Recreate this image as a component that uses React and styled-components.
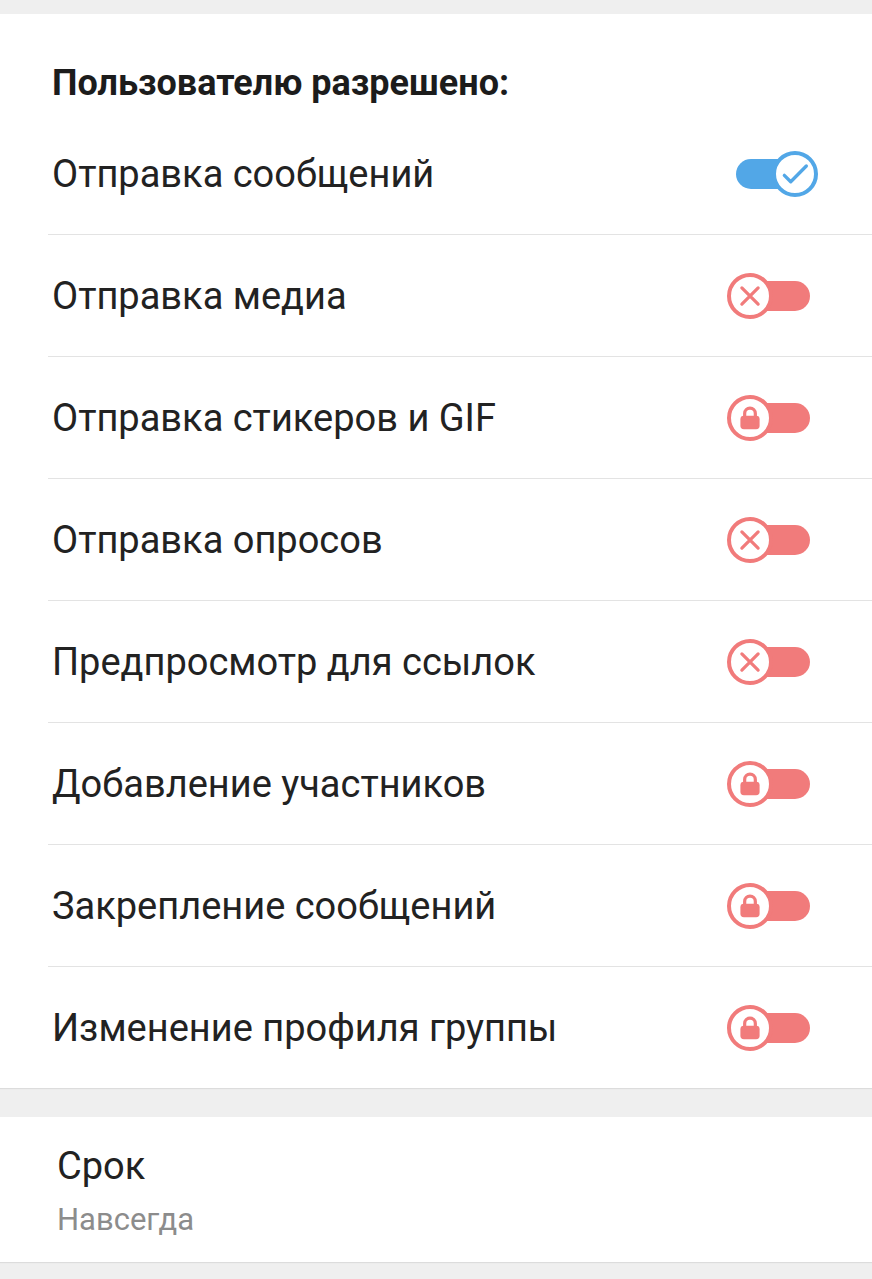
import React from "react";
import styled, { createGlobalStyle } from "styled-components";

const GlobalStyle = createGlobalStyle`
  html, body {
    margin: 0;
    padding: 0;
    background: #efefef;
    font-family: Roboto, "Noto Sans", "Liberation Sans", sans-serif;
  }
`;

const BLUE = "#52a7e7";
const RED = "#f17b7b";

const rows = [
  { label: "Отправка сообщений", state: "on" },
  { label: "Отправка медиа", state: "off" },
  { label: "Отправка стикеров и GIF", state: "locked" },
  { label: "Отправка опросов", state: "off" },
  { label: "Предпросмотр для ссылок", state: "off" },
  { label: "Добавление участников", state: "locked" },
  { label: "Закрепление сообщений", state: "locked" },
  { label: "Изменение профиля группы", state: "locked" },
];

const Page = styled.div`
  padding-top: 14px;
  min-height: 1279px;
  box-sizing: border-box;
`;

const Card = styled.div`
  background: #fff;
  box-shadow: 0 1px 1px rgba(0, 0, 0, 0.08);
`;

const SectionTitle = styled.div`
  padding: 48px 0 9px 52px;
  font-size: 36px;
  line-height: 42px;
  font-weight: 700;
  color: #1c1c1c;
`;

const Row = styled.div`
  display: flex;
  align-items: center;
  justify-content: space-between;
  height: 121px;
  margin-left: 48px;
  padding: 0 54px 0 4px;
  border-bottom: ${(p) => (p.$last ? "none" : "1px solid #e3e3e3")};
`;

const Label = styled.span`
  font-size: 38px;
  color: #222;
`;

const Toggle = styled.div`
  position: relative;
  width: 91px;
  height: 48px;
  display: flex;
  align-items: center;
`;

const Track = styled.div`
  margin-left: 9px;
  width: 74px;
  height: 30px;
  border-radius: 15px;
  background: ${(p) => p.$color};
`;

const Thumb = styled.div`
  position: absolute;
  top: 1px;
  ${(p) => (p.$on ? "right: 0;" : "left: 0;")}
  width: 46px;
  height: 46px;
  box-sizing: border-box;
  border-radius: 50%;
  border: 4px solid ${(p) => p.$color};
  background: #fff;
  display: flex;
  align-items: center;
  justify-content: center;
`;

const Gap = styled.div`
  height: 29px;
`;

const TermCard = styled(Card)`
  padding: 26px 0 22px 57px;
`;

const TermTitle = styled.div`
  font-size: 38px;
  line-height: 46px;
  color: #222;
`;

const TermValue = styled.div`
  margin-top: 11px;
  font-size: 31px;
  line-height: 40px;
  color: #8c8c8c;
`;

const Icon = ({ state, color }) => {
  if (state === "on") {
    return (
      <svg width="32" height="32" viewBox="0 0 24 24" fill="none">
        <path
          d="M4 13l4.8 4.8L20.5 6"
          stroke={color}
          strokeWidth="2.5"
          strokeLinecap="round"
          strokeLinejoin="round"
        />
      </svg>
    );
  }
  if (state === "off") {
    return (
      <svg width="30" height="30" viewBox="0 0 24 24" fill="none">
        <path
          d="M5.5 5.5l13 13M18.5 5.5l-13 13"
          stroke={color}
          strokeWidth="2.6"
          strokeLinecap="round"
        />
      </svg>
    );
  }
  return (
    <svg width="32" height="32" viewBox="0 0 24 24" fill="none">
      <path
        d="M8 11V8.6a4 4 0 0 1 8 0V11"
        stroke={color}
        strokeWidth="2.4"
      />
      <rect x="4.8" y="10.3" width="14.4" height="10.2" rx="2.6" fill={color} />
    </svg>
  );
};

const Switch = ({ state }) => {
  const on = state === "on";
  const color = on ? BLUE : RED;
  return (
    <Toggle>
      <Track $color={color} />
      <Thumb $on={on} $color={color}>
        <Icon state={state} color={color} />
      </Thumb>
    </Toggle>
  );
};

export default function App() {
  return (
    <Page>
      <GlobalStyle />
      <Card>
        <SectionTitle>Пользователю разрешено:</SectionTitle>
        {rows.map((r, i) => (
          <Row key={r.label} $last={i === rows.length - 1}>
            <Label>{r.label}</Label>
            <Switch state={r.state} />
          </Row>
        ))}
      </Card>
      <Gap />
      <TermCard>
        <TermTitle>Срок</TermTitle>
        <TermValue>Навсегда</TermValue>
      </TermCard>
    </Page>
  );
}
